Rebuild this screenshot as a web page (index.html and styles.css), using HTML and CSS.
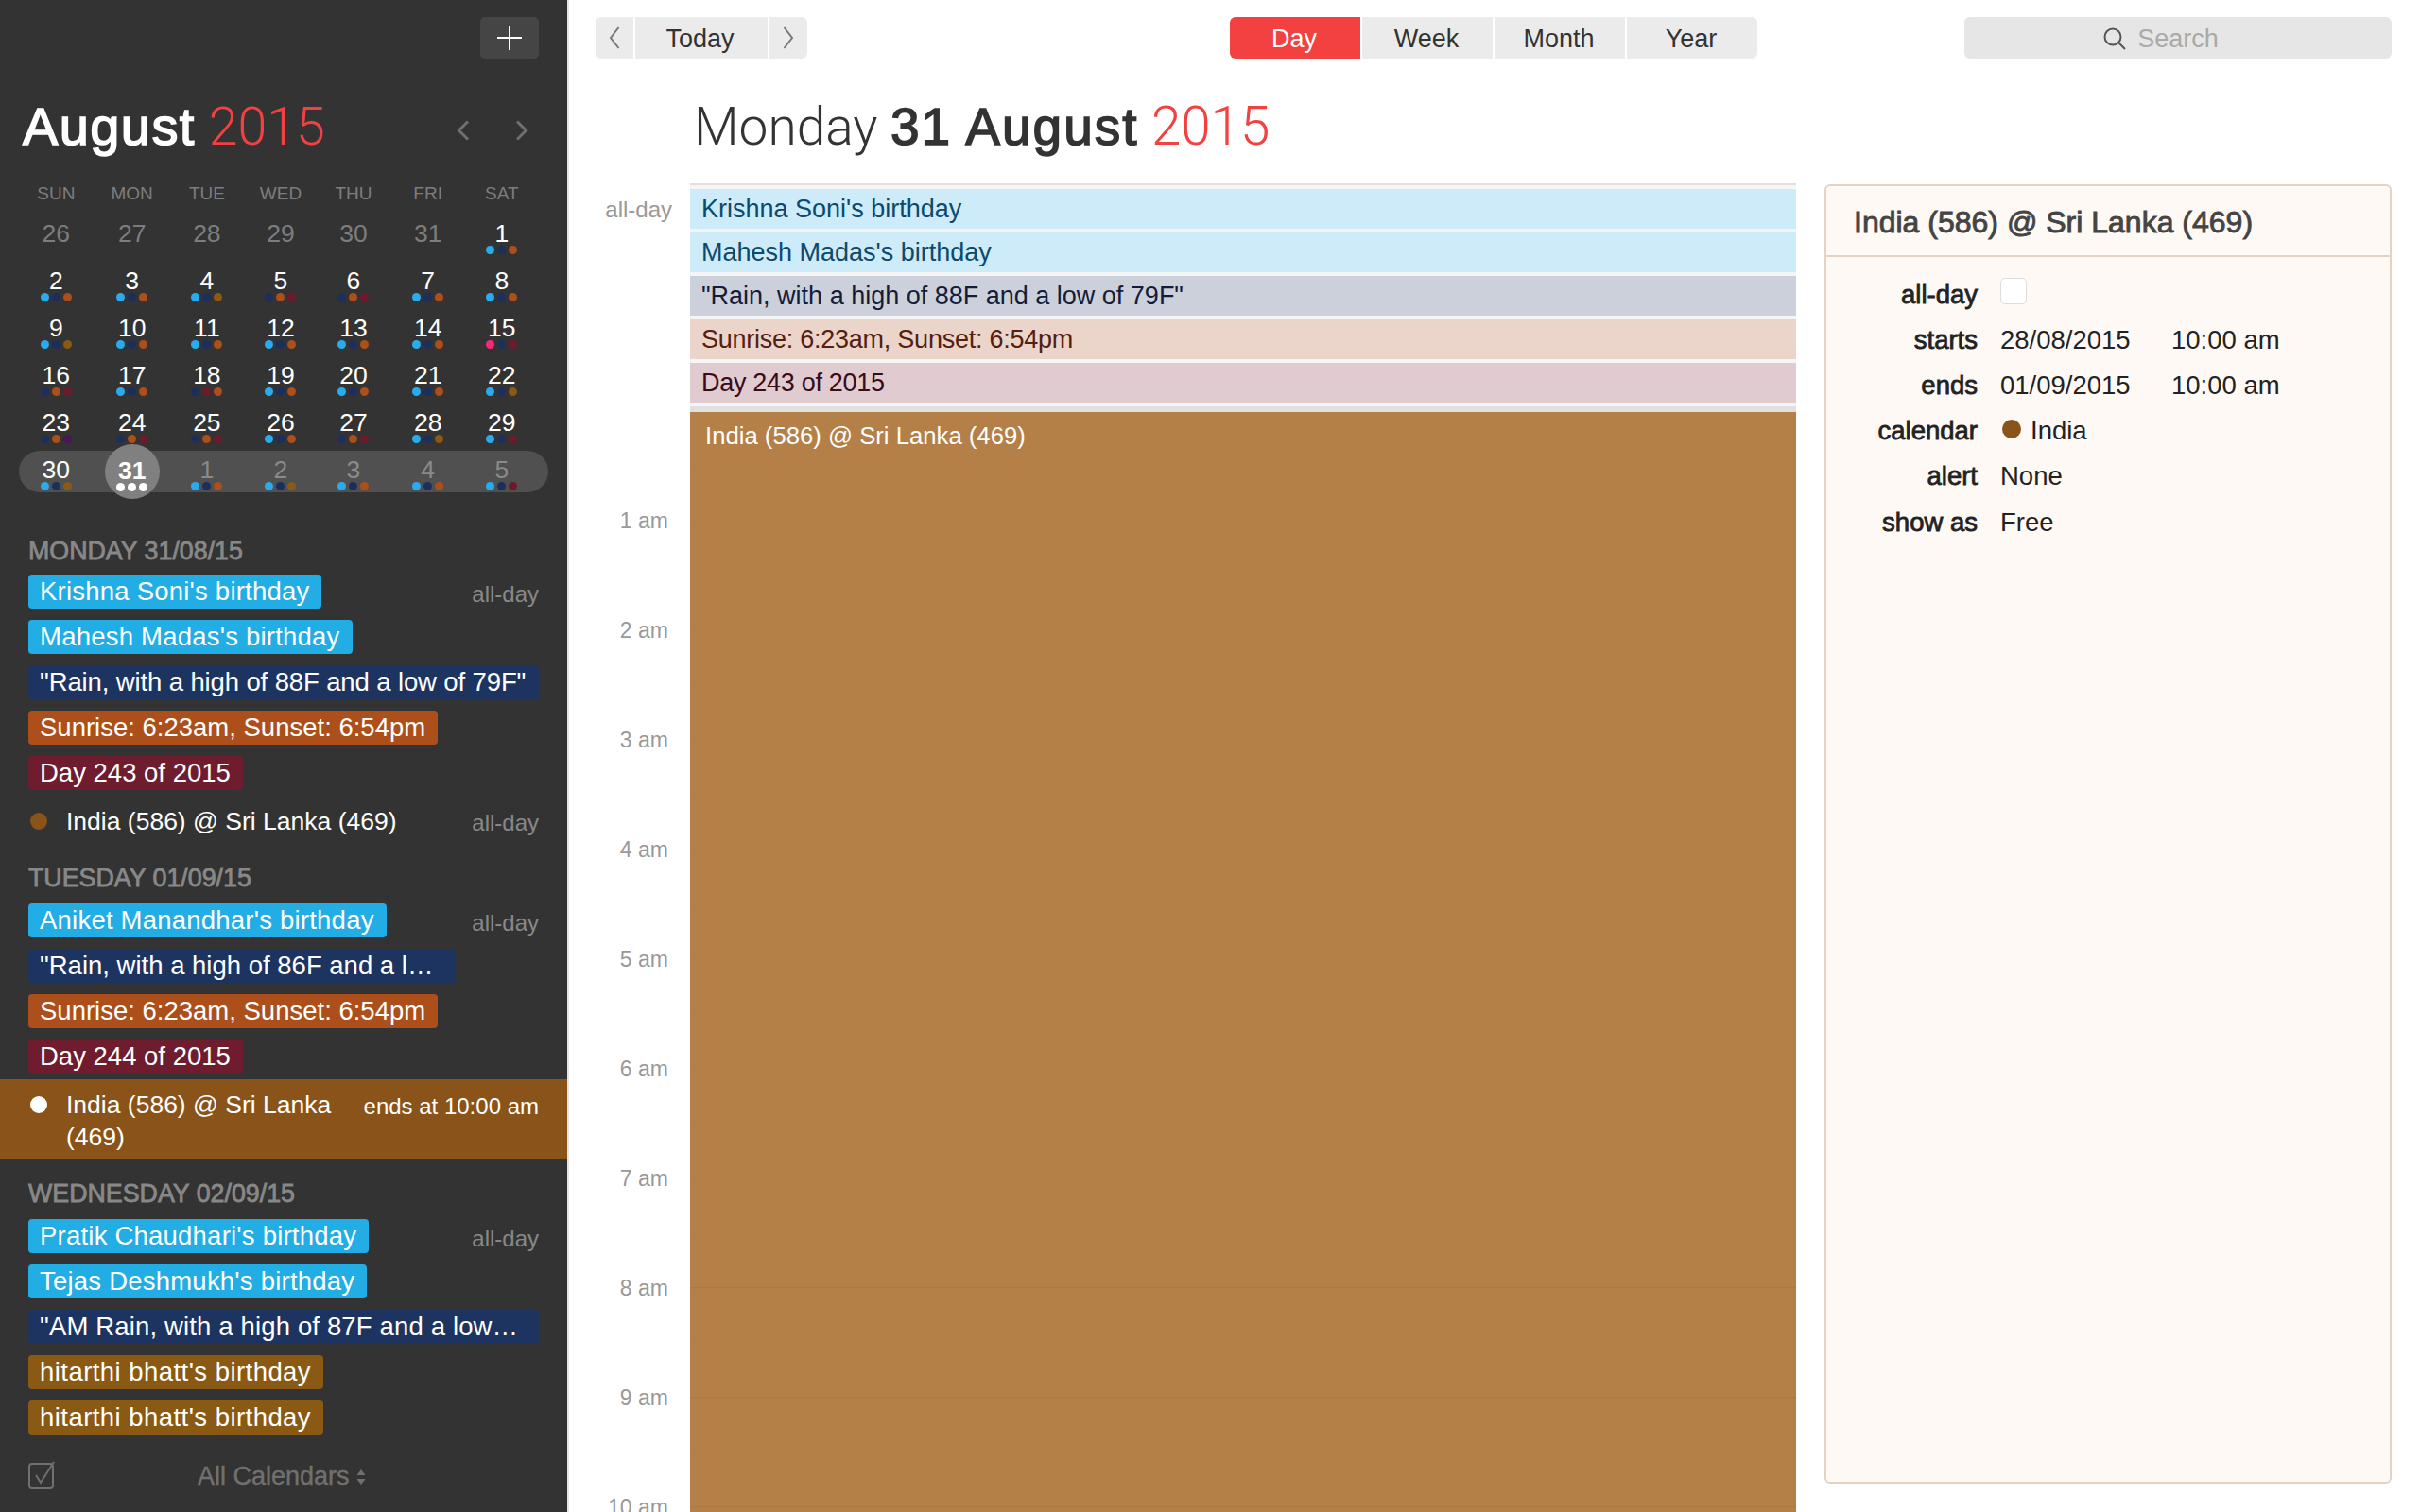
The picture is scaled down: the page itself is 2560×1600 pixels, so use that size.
FILE: index.html
```html
<!DOCTYPE html>
<html lang="en">
<head>
    <meta charset="UTF-8">
    <title>Calendar - Monday 31 August 2015</title>
    <link rel="stylesheet" href="styles.css">
</head>
<body>
<div class="app">

    <aside class="sidebar">
        <div class="add-row">
            <button class="add-btn">
                <svg width="26" height="26" viewBox="0 0 26 26"><path d="M13 0V26M0 13H26" stroke="#fff" stroke-width="2" fill="none"/></svg>
            </button>
        </div>

        <div class="month-head">
            <h1 class="month-title">August <span class="year">2015</span></h1>
            <div class="month-nav">
                <svg width="14" height="22" viewBox="0 0 14 22"><path d="M12 1.5L2.5 11L12 20.5" stroke="#707070" stroke-width="3" fill="none"/></svg>
                <svg width="14" height="22" viewBox="0 0 14 22"><path d="M2 1.5L11.5 11L2 20.5" stroke="#707070" stroke-width="3" fill="none"/></svg>
            </div>
        </div>

        <div class="weekdays">
            <span>SUN</span><span>MON</span><span>TUE</span><span>WED</span><span>THU</span><span>FRI</span><span>SAT</span>
        </div>

        <div class="week">
            <div class="day out">26</div>
            <div class="day out">27</div>
            <div class="day out">28</div>
            <div class="day out">29</div>
            <div class="day out">30</div>
            <div class="day out">31</div>
            <div class="day">1<div class="dots"><i class="b"></i><i class="n"></i><i class="o"></i></div></div>
        </div>
        <div class="week">
            <div class="day">2<div class="dots"><i class="b"></i><i class="n"></i><i class="o"></i></div></div>
            <div class="day">3<div class="dots"><i class="b"></i><i class="n"></i><i class="o"></i></div></div>
            <div class="day">4<div class="dots"><i class="b"></i><i class="n"></i><i class="g"></i></div></div>
            <div class="day">5<div class="dots"><i class="n"></i><i class="o"></i><i class="m"></i></div></div>
            <div class="day">6<div class="dots"><i class="n"></i><i class="o"></i><i class="m"></i></div></div>
            <div class="day">7<div class="dots"><i class="b"></i><i class="n"></i><i class="o"></i></div></div>
            <div class="day">8<div class="dots"><i class="b"></i><i class="n"></i><i class="o"></i></div></div>
        </div>
        <div class="week">
            <div class="day">9<div class="dots"><i class="b"></i><i class="n"></i><i class="g"></i></div></div>
            <div class="day">10<div class="dots"><i class="b"></i><i class="n"></i><i class="o"></i></div></div>
            <div class="day">11<div class="dots"><i class="b"></i><i class="n"></i><i class="o"></i></div></div>
            <div class="day">12<div class="dots"><i class="b"></i><i class="n"></i><i class="o"></i></div></div>
            <div class="day">13<div class="dots"><i class="b"></i><i class="n"></i><i class="o"></i></div></div>
            <div class="day">14<div class="dots"><i class="b"></i><i class="n"></i><i class="o"></i></div></div>
            <div class="day">15<div class="dots"><i class="p"></i><i class="n"></i><i class="m"></i></div></div>
        </div>
        <div class="week">
            <div class="day">16<div class="dots"><i class="n"></i><i class="o"></i><i class="m"></i></div></div>
            <div class="day">17<div class="dots"><i class="b"></i><i class="n"></i><i class="o"></i></div></div>
            <div class="day">18<div class="dots"><i class="n"></i><i class="m"></i><i class="o"></i></div></div>
            <div class="day">19<div class="dots"><i class="b"></i><i class="n"></i><i class="o"></i></div></div>
            <div class="day">20<div class="dots"><i class="b"></i><i class="n"></i><i class="o"></i></div></div>
            <div class="day">21<div class="dots"><i class="b"></i><i class="n"></i><i class="o"></i></div></div>
            <div class="day">22<div class="dots"><i class="b"></i><i class="n"></i><i class="g"></i></div></div>
        </div>
        <div class="week">
            <div class="day">23<div class="dots"><i class="n"></i><i class="o"></i><i class="v"></i></div></div>
            <div class="day">24<div class="dots"><i class="n"></i><i class="o"></i><i class="m"></i></div></div>
            <div class="day">25<div class="dots"><i class="n"></i><i class="o"></i><i class="m"></i></div></div>
            <div class="day">26<div class="dots"><i class="b"></i><i class="n"></i><i class="o"></i></div></div>
            <div class="day">27<div class="dots"><i class="n"></i><i class="o"></i><i class="m"></i></div></div>
            <div class="day">28<div class="dots"><i class="b"></i><i class="n"></i><i class="g"></i></div></div>
            <div class="day">29<div class="dots"><i class="b"></i><i class="n"></i><i class="m"></i></div></div>
        </div>
        <div class="week current">
            <div class="day">30<div class="dots"><i class="b"></i><i class="n"></i><i class="g"></i></div></div>
            <div class="day selected">31<div class="dots"><i class="w"></i><i class="w"></i><i class="w"></i></div></div>
            <div class="day dim">1<div class="dots"><i class="b"></i><i class="n"></i><i class="o"></i></div></div>
            <div class="day dim">2<div class="dots"><i class="b"></i><i class="n"></i><i class="g"></i></div></div>
            <div class="day dim">3<div class="dots"><i class="b"></i><i class="n"></i><i class="o"></i></div></div>
            <div class="day dim">4<div class="dots"><i class="b"></i><i class="n"></i><i class="o"></i></div></div>
            <div class="day dim">5<div class="dots"><i class="b"></i><i class="n"></i><i class="m"></i></div></div>
        </div>

        <div class="agenda">
            <h3 class="agenda-date first">MONDAY 31/08/15</h3>
            <div class="ev-row"><span class="pill blue">Krishna Soni's birthday</span><span class="when">all-day</span></div>
            <div class="ev-row"><span class="pill blue">Mahesh Madas's birthday</span></div>
            <div class="ev-row"><span class="pill navy full">"Rain, with a high of 88F and a low of 79F"</span></div>
            <div class="ev-row"><span class="pill rust">Sunrise: 6:23am, Sunset: 6:54pm</span></div>
            <div class="ev-row"><span class="pill wine">Day 243 of 2015</span></div>
            <div class="dot-row">
                <span class="cal-dot"></span>
                <span class="dot-text">India (586) @ Sri Lanka (469)</span>
                <span class="when">all-day</span>
            </div>

            <h3 class="agenda-date">TUESDAY 01/09/15</h3>
            <div class="ev-row"><span class="pill blue">Aniket Manandhar's birthday</span><span class="when">all-day</span></div>
            <div class="ev-row"><span class="pill navy cut">"Rain, with a high of 86F and a l…</span></div>
            <div class="ev-row"><span class="pill rust">Sunrise: 6:23am, Sunset: 6:54pm</span></div>
            <div class="ev-row"><span class="pill wine">Day 244 of 2015</span></div>
            <div class="dot-row active">
                <span class="cal-dot"></span>
                <span class="dot-text">India (586) @ Sri Lanka (469)</span>
                <span class="when">ends at 10:00 am</span>
            </div>

            <h3 class="agenda-date">WEDNESDAY 02/09/15</h3>
            <div class="ev-row"><span class="pill blue">Pratik Chaudhari's birthday</span><span class="when">all-day</span></div>
            <div class="ev-row"><span class="pill blue">Tejas Deshmukh's birthday</span></div>
            <div class="ev-row"><span class="pill navy wide">"AM Rain, with a high of 87F and a low…</span></div>
            <div class="ev-row"><span class="pill gold">hitarthi bhatt's birthday</span></div>
            <div class="ev-row"><span class="pill gold">hitarthi bhatt's birthday</span></div>
        </div>

        <div class="side-foot">
            <svg class="foot-check" width="30" height="30" viewBox="0 0 30 30"><rect x="1" y="3" width="25" height="26" rx="3" fill="none" stroke="#707070" stroke-width="2"/><path d="M8 15L13 23L27 1" fill="none" stroke="#707070" stroke-width="2"/></svg>
            <span class="foot-label">All Calendars</span>
            <svg class="foot-sort" width="10" height="18" viewBox="0 0 10 18"><path d="M5 1L9.5 7H0.5ZM5 17L0.5 11H9.5Z" fill="#707070"/></svg>
        </div>
    </aside>

    <main class="main">
        <div class="toolbar">
            <div class="today-group">
                <button class="tb-btn arrow">
                    <svg width="12" height="24" viewBox="0 0 12 24"><path d="M10.5 1L2 12L10.5 23" stroke="#777" stroke-width="2" fill="none"/></svg>
                </button>
                <button class="tb-btn today">Today</button>
                <button class="tb-btn arrow">
                    <svg width="12" height="24" viewBox="0 0 12 24"><path d="M1.5 1L10 12L1.5 23" stroke="#777" stroke-width="2" fill="none"/></svg>
                </button>
            </div>
            <div class="views">
                <button class="tb-btn view active">Day</button>
                <button class="tb-btn view">Week</button>
                <button class="tb-btn view">Month</button>
                <button class="tb-btn view">Year</button>
            </div>
            <div class="search">
                <svg width="24" height="24" viewBox="0 0 24 24"><circle cx="10" cy="10" r="8.5" fill="none" stroke="#555" stroke-width="2"/><path d="M16 16L23 23" stroke="#555" stroke-width="2"/></svg>
                <span>Search</span>
            </div>
        </div>

        <h2 class="day-title">Monday <b>31 August</b> <span class="year">2015</span></h2>

        <div class="day-body">
            <div class="gutter">
                <div class="allday-label">all-day</div>
                <div class="hours">
                    <div class="hour">1 am</div>
                    <div class="hour">2 am</div>
                    <div class="hour">3 am</div>
                    <div class="hour">4 am</div>
                    <div class="hour">5 am</div>
                    <div class="hour">6 am</div>
                    <div class="hour">7 am</div>
                    <div class="hour">8 am</div>
                    <div class="hour">9 am</div>
                    <div class="hour">10 am</div>
                </div>
            </div>

            <div class="day-col">
                <div class="allday">
                    <div class="banner sky">Krishna Soni's birthday</div>
                    <div class="banner sky">Mahesh Madas's birthday</div>
                    <div class="banner slate">"Rain, with a high of 88F and a low of 79F"</div>
                    <div class="banner peach">Sunrise: 6:23am, Sunset: 6:54pm</div>
                    <div class="banner rose">Day 243 of 2015</div>
                </div>
                <div class="timed">India (586) @ Sri Lanka (469)</div>
            </div>

            <section class="inspector">
                <div class="insp-title">India (586) @ Sri Lanka (469)</div>
                <div class="insp-rows">
                    <div class="insp-row"><span class="insp-label">all-day</span><span class="insp-check"></span></div>
                    <div class="insp-row"><span class="insp-label">starts</span><span class="insp-date">28/08/2015</span><span>10:00 am</span></div>
                    <div class="insp-row"><span class="insp-label">ends</span><span class="insp-date">01/09/2015</span><span>10:00 am</span></div>
                    <div class="insp-row"><span class="insp-label">calendar</span><span class="insp-dot"></span><span>India</span></div>
                    <div class="insp-row"><span class="insp-label">alert</span><span>None</span></div>
                    <div class="insp-row"><span class="insp-label">show as</span><span>Free</span></div>
                </div>
            </section>
        </div>
    </main>

</div>
</body>
</html>
```

FILE: styles.css
```css
* {
    box-sizing: border-box;
}
body {
    margin: 0;
    font-family: "Liberation Sans", Arial, sans-serif;
    background-color: #fff;
    color: #222;
}
button {
    font-family: inherit;
    border: none;
    padding: 0;
}
.app {
    display: flex;
    width: 2560px;
    height: 1600px;
    overflow: hidden;
}
.year {
    color: #f34141;
    font-family: Roboto, sans-serif;
    font-size: 56.5px;
    font-weight: 300;
    letter-spacing: 0;
    -webkit-text-stroke: 0;
}

/* sidebar */
.sidebar {
    width: 600px;
    flex-shrink: 0;
    background-color: #333;
    color: #fff;
    padding: 18px 30px 0 20px;
}
.add-row {
    display: flex;
    justify-content: flex-end;
}
.add-btn {
    width: 62px;
    height: 44px;
    background-color: #454545;
    border-radius: 5px;
    display: flex;
    align-items: center;
    justify-content: center;
}
.month-head {
    display: flex;
    justify-content: space-between;
    align-items: center;
    margin-top: 42px;
    height: 60px;
    padding-left: 4px;
}
.month-title {
    margin: 0;
    font-size: 56px;
    line-height: 60px;
    font-weight: normal;
    letter-spacing: 1.4px;
    -webkit-text-stroke: 1.5px #fff;
}
.month-title .year {
    margin-left: -3px;
    font-size: 55.5px;
}
.month-nav {
    display: flex;
    gap: 48px;
    padding-right: 11px;
    margin-top: 8px;
}
.weekdays,
.week {
    display: grid;
    grid-template-columns: 78.6px 82.2px 76.2px 80px 74px 83.4px 72.8px;
}
.weekdays {
    margin-top: 29px;
    height: 24px;
    line-height: 24px;
    font-size: 19px;
    color: #7d7d7d;
    text-align: center;
}
.week {
    height: 50px;
}
.weekdays + .week {
    margin-top: 10px;
}
.week.current {
    width: 560px;
    height: 44px;
    background-color: #505050;
    border-radius: 22px;
}
.day {
    position: relative;
    padding-top: 5px;
    height: 44px;
    font-size: 26.5px;
    line-height: 30px;
    text-align: center;
}
.day.out {
    color: #7d7d7d;
}
.day.dim {
    color: #8a8a8a;
}
.day.selected {
    font-weight: bold;
    padding-top: 6px;
    z-index: 0;
}
.day.selected::before {
    content: "";
    position: absolute;
    z-index: -1;
    left: 12px;
    top: -7px;
    width: 58px;
    height: 58px;
    border-radius: 50%;
    background-color: #808080;
}
.dots {
    display: flex;
    justify-content: center;
    gap: 3px;
    margin-top: -2px;
}
.dots i {
    width: 9px;
    height: 9px;
    border-radius: 50%;
}
.dots .b { background-color: #29abf0; }
.dots .n { background-color: #1c2f5c; }
.dots .o { background-color: #ad4f1b; }
.dots .m { background-color: #6e1a2d; }
.dots .g { background-color: #8a5a14; }
.dots .p { background-color: #f5287a; }
.dots .v { background-color: #4a1654; }
.dots .w { background-color: #fff; }

/* agenda list */
.agenda {
    margin-top: 47px;
    padding-left: 10px;
}
.agenda-date {
    margin: 24px 0 12px;
    font-size: 26.8px;
    line-height: 30px;
    font-weight: normal;
    color: #888;
    -webkit-text-stroke: 0.8px #888;
}
.agenda-date.first {
    margin-top: 0;
    margin-bottom: 10px;
}
.ev-row {
    display: flex;
    justify-content: space-between;
    align-items: center;
    height: 36px;
    margin-bottom: 12px;
}
.pill {
    height: 36px;
    line-height: 36px;
    padding: 0 13px 0 12px;
    border-radius: 4px;
    font-size: 27.5px;
    white-space: nowrap;
}
.pill.blue { background-color: #22ade4; letter-spacing: 0.22px; }
.pill.navy { background-color: #1d3461; }
.pill.rust { background-color: #ad4f1b; }
.pill.wine { background-color: #6e1c2e; }
.pill.gold { background-color: #8a5a14; letter-spacing: 0.45px; }
.pill.full { width: 540px; letter-spacing: -0.12px; }
.pill.cut { padding-right: 24px; }
.pill.wide { width: 540px; letter-spacing: 0.15px; }
.when {
    font-size: 24px;
    color: #888;
    padding-top: 6px;
}
.dot-row {
    display: flex;
    align-items: flex-start;
    padding-top: 4px;
    height: 42px;
    font-size: 26.5px;
    line-height: 34px;
}
.cal-dot {
    width: 18px;
    height: 18px;
    margin: 8px 20px 0 2px;
    flex-shrink: 0;
    border-radius: 50%;
    background-color: #8a5319;
}
.dot-text {
    flex: 1;
}
.dot-row .when {
    padding-top: 2px;
}
.dot-row.active {
    margin: -6px -30px 0 -30px;
    padding: 10px 30px 0 30px;
    height: 84px;
    background-color: #8a5319;
}
.dot-row.active .cal-dot {
    background-color: #fff;
}
.dot-row.active .when {
    color: #fff;
    white-space: nowrap;
    padding-left: 30px;
}
.dot-row.active + .agenda-date {
    margin-top: 22px;
}
.side-foot {
    display: flex;
    align-items: center;
    margin-top: 25px;
    padding-left: 10px;
    color: #707070;
    font-size: 27px;
}
.foot-label {
    margin-left: 149px;
    padding-top: 4px;
    -webkit-text-stroke: 0.4px #707070;
}
.foot-sort {
    margin: 4px 0 0 7px;
}

/* main column */
.main {
    flex: 1;
    min-width: 0;
    border-left: 2px solid #e5e5e5;
}
.toolbar {
    display: flex;
    padding: 18px 30px 0 28px;
}
.tb-btn {
    height: 44px;
    padding-top: 2px;
    font-size: 27px;
    background-color: #ebebeb;
    color: #333;
}
.today-group {
    display: flex;
    gap: 2px;
}
.today-group .arrow {
    width: 40px;
    padding-top: 0;
    display: flex;
    align-items: center;
    justify-content: center;
}
.today-group .arrow:first-child {
    border-radius: 6px 0 0 6px;
}
.today-group .arrow:last-child {
    border-radius: 0 6px 6px 0;
}
.today-group .today {
    width: 140px;
    padding-right: 3px;
}
.views {
    display: flex;
    gap: 2px;
    margin-left: 447px;
}
.view {
    width: 138px;
    padding-right: 2px;
}
.view:first-child {
    border-radius: 6px 0 0 6px;
}
.view:last-child {
    border-radius: 0 6px 6px 0;
}
.view.active {
    background-color: #f34141;
    color: #fff;
}
.search {
    margin-left: auto;
    width: 452px;
    height: 44px;
    background-color: #e6e6e6;
    border-radius: 6px;
    display: flex;
    align-items: center;
    justify-content: center;
    gap: 12px;
    padding: 2px 36px 0 0;
    font-size: 27px;
    color: #aaa;
}
.day-title {
    margin: 42px 0 30px 132px;
    font-family: Roboto, sans-serif;
    font-size: 55px;
    line-height: 60px;
    font-weight: 300;
    color: #333;
}
.day-title b {
    font-family: "Liberation Sans", Arial, sans-serif;
    font-weight: normal;
    letter-spacing: 2px;
    -webkit-text-stroke: 1.5px #333;
}

.day-body {
    display: flex;
    height: 1406px;
    overflow: hidden;
}
.gutter {
    width: 128px;
    flex-shrink: 0;
    color: #999;
    text-align: right;
}
.allday-label {
    margin-top: 13px;
    height: 30px;
    line-height: 30px;
    font-size: 24px;
    padding-right: 19px;
}
.hours {
    margin-top: 256px;
    padding-right: 23px;
    font-size: 23px;
}
.hour {
    height: 116px;
    line-height: 116px;
}
.day-col {
    width: 1170px;
    flex-shrink: 0;
    display: flex;
    flex-direction: column;
}
.allday {
    border-top: 2px solid #e0e0e0;
    border-bottom: 6px solid #e0e0e0;
    background-color: #f5f5f5;
    padding: 4px 0;
    display: flex;
    flex-direction: column;
    gap: 4px;
}
.banner {
    height: 42px;
    line-height: 42px;
    padding-left: 12px;
    font-size: 27px;
}
.banner.sky { background-color: #ceebfa; color: #0b4a6c; }
.banner.slate { background-color: #cbd0da; color: #141c3a; }
.banner.peach { background-color: #ebd5cb; color: #552010; letter-spacing: -0.25px; }
.banner.rose { background-color: #dfcbd0; color: #3a0a18; letter-spacing: -0.3px; }
/* hour lines only really show from 8 am down, the rest are barely there */
.timed {
    flex: 1;
    padding: 9px 0 0 16px;
    font-size: 25.7px;
    line-height: 32px;
    color: #fff;
    background-color: #b57f48;
    background-image:
        repeating-linear-gradient(to bottom,
            transparent 0, transparent 115px, #ae7840 115px, #ae7840 116px),
        repeating-linear-gradient(to bottom,
            transparent 0, transparent 57px, #b47e47 57px, #b47e47 58px,
            transparent 58px, transparent 115px, #b37d46 115px, #b37d46 116px);
    background-position: 0 811px, 0 0;
    background-repeat: no-repeat;
}

/* inspector */
.inspector {
    width: 600px;
    height: 1375px;
    margin: 1px 0 0 30px;
    background-color: #fef9f5;
    border: 2px solid #e4d3c3;
    border-radius: 6px;
}
.insp-title {
    height: 75px;
    line-height: 76px;
    padding-left: 29px;
    font-size: 32px;
    color: #444;
    -webkit-text-stroke: 0.9px #444;
    border-bottom: 2px solid #e4d3c3;
}
.insp-rows {
    padding-top: 16px;
}
.insp-row {
    display: flex;
    align-items: center;
    height: 48px;
    font-size: 27.5px;
    color: #222;
}
.insp-row:last-child {
    margin-top: 1px;
}
.insp-label {
    width: 160px;
    margin-right: 24px;
    text-align: right;
    -webkit-text-stroke: 0.8px #222;
}
.insp-date {
    width: 181px;
}
.insp-check {
    width: 28px;
    height: 28px;
    margin-top: -8px;
    background-color: #fff;
    border: 1px solid #ddd;
    border-radius: 5px;
}
.insp-dot {
    width: 20px;
    height: 20px;
    margin: -4px 10px 0 2px;
    border-radius: 50%;
    background-color: #8a5319;
}
```
